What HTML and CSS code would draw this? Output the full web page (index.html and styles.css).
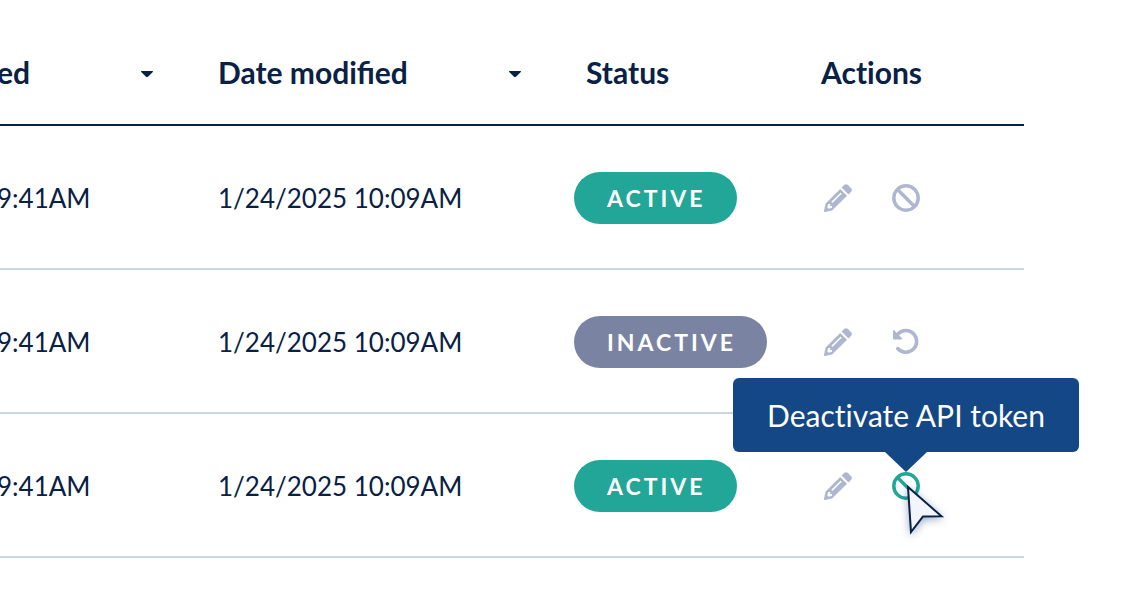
FILE: index.html
```html
<!DOCTYPE html>
<html lang="en">
<head>
<meta charset="utf-8">
<meta name="viewport" content="width=device-width, initial-scale=1">
<title>API tokens</title>
<link rel="stylesheet" href="styles.css">
</head>
<body>
<svg class="sprite" aria-hidden="true">
  <symbol id="caret" viewBox="0 0 14 8"><path d="M1.6 1H12.4Q13.6 1 12.8 2L8 6.8Q7 7.6 6 6.8L1.2 2Q.4 1 1.6 1Z" fill="currentColor"/></symbol>
  <symbol id="pencil" viewBox="0 0 28 28">
    <path fill="currentColor" fill-rule="evenodd" d="M16.2 4.9L23 11.7L8.7 26Q8.2 26.4 7.6 26.6L1.2 28Q-.2 28.2 0 26.8L1.4 20.4Q1.6 19.6 2.1 19ZM7.6 17.6Q7.3 18.8 8.6 18.7L17.4 9.9Q17.7 8.6 16.3 8.9ZM4.4 20L3.2 23.3L4.7 24.8L8 23.7V21.9H6.2V20Z"/>
    <path fill="currentColor" d="M17.6 3.5L20 1.1Q22 -.8 24 1.1L26.9 4Q28.8 6 26.9 8L24.5 10.4Z"/>
  </symbol>
  <symbol id="ban" viewBox="0 0 28 28"><g fill="none" stroke="currentColor" stroke-width="3.5"><circle cx="14" cy="14" r="12.2"/><path d="M5.5 5.5L22.5 22.5"/></g></symbol>
  <symbol id="undo" viewBox="0 0 28 28"><path d="M5.7 20.5A10.8 10.8 0 1 0 6 6" fill="none" stroke="currentColor" stroke-width="3.5" stroke-linecap="round"/><path d="M1 3.2Q1 1.4 2.3 2.6L10 10.2Q10.8 11.5 9.4 11.5H2Q1 11.5 1 10.5Z" fill="currentColor"/></symbol>
</svg>
<main class="page">
  <table class="tokens">
    <colgroup><col><col class="col-modified"><col class="col-status"><col class="col-actions"></colgroup>
    <thead>
      <tr>
        <th scope="col"><button type="button" class="sort"><span>ed</span><svg class="caret"><use href="#caret"/></svg></button></th>
        <th scope="col"><button type="button" class="sort"><span>Date modified</span><svg class="caret"><use href="#caret"/></svg></button></th>
        <th scope="col">Status</th>
        <th scope="col" class="plain">Actions</th>
      </tr>
    </thead>
    <tbody>
      <tr>
        <td>9:41AM</td>
        <td>1/24/2025 10:09AM</td>
        <td><span class="badge badge-active">ACTIVE</span></td>
        <td><div class="actions">
          <button type="button" class="action" aria-label="Edit"><svg class="icon"><use href="#pencil"/></svg></button>
          <button type="button" class="action" aria-label="Deactivate"><svg class="icon"><use href="#ban"/></svg></button>
        </div></td>
      </tr>
      <tr>
        <td>9:41AM</td>
        <td>1/24/2025 10:09AM</td>
        <td><span class="badge badge-inactive">INACTIVE</span></td>
        <td><div class="actions">
          <button type="button" class="action" aria-label="Edit"><svg class="icon"><use href="#pencil"/></svg></button>
          <button type="button" class="action" aria-label="Reactivate"><svg class="icon"><use href="#undo"/></svg></button>
        </div></td>
      </tr>
      <tr>
        <td>9:41AM</td>
        <td>1/24/2025 10:09AM</td>
        <td><span class="badge badge-active">ACTIVE</span></td>
        <td><div class="actions">
          <button type="button" class="action" aria-label="Edit"><svg class="icon"><use href="#pencil"/></svg></button>
          <div class="hovered">
            <button type="button" class="action action-hover" aria-labelledby="tip"><svg class="icon"><use href="#ban"/></svg></button>
            <div class="tooltip plain" id="tip" role="tooltip">Deactivate API token</div>
            <svg class="cursor" viewBox="0 0 40 52" aria-hidden="true"><path d="M2 3L35.5 32.2L17 32.4L5 48Z"/></svg>
          </div>
        </div></td>
      </tr>
    </tbody>
  </table>
</main>
</body>
</html>
```
FILE: styles.css
```css
:root {
  --navy: #082144;
  --line: #cbd6e2;
  --teal: #21a697;
  --slate: #7a84a2;
  --muted: #afb7d0;
  --blue: #144785;
}

* { box-sizing: border-box; }

body {
  margin: 0;
  background: #fff;
  color: var(--navy);
  font: 26px/52px Lato, "Open Sans", sans-serif;
}

button {
  padding: 0;
  border: 0;
  background: none;
  color: inherit;
  font: inherit;
  cursor: pointer;
}

.sprite {
  position: absolute;
  width: 0;
  height: 0;
}

.page {
  padding: 20px 118px 38px 0;
  overflow: hidden;
}

.tokens {
  width: 100%;
  table-layout: fixed;
  border-collapse: separate;
  border-spacing: 0;
}

.col-modified { width: 368px; }
.col-status { width: 235px; }
.col-actions { width: 203px; }

th {
  padding: 26px 0;
  border-bottom: 2px solid var(--navy);
  font-size: 30px;
  font-weight: 700;
  text-align: left;
}

td {
  padding: 46px 0 44px;
  border-bottom: 2px solid var(--line);
  white-space: nowrap;
}

th:first-child span,
td:first-child {
  text-indent: -3px;
}

.plain { font-variant-ligatures: none; }

.sort {
  display: flex;
  align-items: center;
  justify-content: space-between;
  width: 100%;
  padding-right: 64px;
}

.caret {
  width: 14px;
  height: 8px;
  margin-top: 3px;
}

.badge {
  display: block;
  width: fit-content;
  margin-left: -12px;
  padding: 0 31px 0 33px;
  border-radius: 26px;
  color: #fff;
  font-size: 23px;
  font-weight: 700;
  letter-spacing: 3px;
}

.badge-active { background: var(--teal); }
.badge-inactive { background: var(--slate); }

.actions {
  display: flex;
  align-items: center;
  gap: 40px;
  height: 52px;
  padding-left: 3px;
}

.action {
  display: block;
  color: var(--muted);
}

.action-hover { color: var(--teal); }

.icon {
  display: block;
  width: 28px;
  height: 28px;
}

.hovered { position: relative; }

.tooltip {
  position: absolute;
  bottom: 100%;
  left: 50%;
  min-width: 346px;
  margin-bottom: 20px;
  padding: 11px 32px;
  border-radius: 6px;
  background: var(--blue);
  color: #fff;
  font-size: 30px;
  text-align: center;
  transform: translateX(-50%);
}

.tooltip::after {
  content: "";
  position: absolute;
  top: 100%;
  left: 50%;
  border: solid transparent;
  border-width: 20px 21px 0;
  border-top-color: var(--blue);
  transform: translateX(-50%);
}

.cursor {
  position: absolute;
  top: 12px;
  left: 14px;
  width: 40px;
  height: 52px;
  overflow: visible;
  fill: #f2f5fb;
  stroke: var(--navy);
  stroke-width: 2;
  filter: drop-shadow(0 2px 4px #082a7a66);
  pointer-events: none;
}
```
